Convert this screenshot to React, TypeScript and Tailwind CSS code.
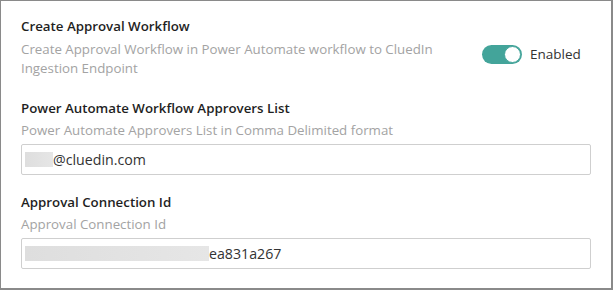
import React from 'react'

function Redacted({ width }: { width: number }) {
  return (
    <span
      className="inline-block h-[15px] bg-gradient-to-r from-[#dedede] to-[#e6e6e6]"
      style={{ width }}
    />
  )
}

function Field({ value, hidden }: { value: string; hidden: number }) {
  return (
    <div className="flex h-[31px] items-center rounded-[2px] border border-[#cfcfcf] bg-white pl-[3px] text-[14.2px] text-[#333]">
      <Redacted width={hidden} />
      <span>{value}</span>
    </div>
  )
}

function Toggle() {
  return (
    <div className="mt-[4px] flex w-[109px] shrink-0 items-center">
      <div className="flex h-[19px] w-[40px] items-center justify-end rounded-full bg-[#43a49a] p-[1px]">
        <div className="h-[17px] w-[17px] rounded-full border border-[#43a49a] bg-white" />
      </div>
      <span className="ml-[8px] text-[13.5px] text-[#333]">Enabled</span>
    </div>
  )
}

export default function App() {
  return (
    <div
      className="h-[290px] w-[613px] border-b-2 border-l border-r-2 border-t border-[#8a8a8a] bg-white px-[20px] pt-[15px]"
      style={{ fontFamily: '"Open Sans", "Noto Sans", sans-serif' }}
    >
      <section className="mb-[20px]">
        <h3 className="text-[13.3px] font-semibold leading-[20px] text-[#1f1f1f]">Create Approval Workflow</h3>
        <div className="mt-[4px] flex items-start justify-between">
          <p className="w-[440px] text-[13.3px] leading-[19px] text-[#a3a3a3]">
            Create Approval Workflow in Power Automate workflow to CluedIn Ingestion Endpoint
          </p>
          <Toggle />
        </div>
      </section>

      <section className="mb-[17px]">
        <h3 className="text-[13.3px] font-semibold leading-[20px] text-[#1f1f1f]">Power Automate Workflow Approvers List</h3>
        <p className="mt-[3px] text-[13.3px] leading-[19px] text-[#a3a3a3]">
          Power Automate Approvers List in Comma Delimited format
        </p>
        <div className="mt-[4px]">
          <Field value="@cluedin.com" hidden={28} />
        </div>
      </section>

      <section>
        <h3 className="text-[13.3px] font-semibold leading-[20px] text-[#1f1f1f]">Approval Connection Id</h3>
        <p className="mt-[3px] text-[13.3px] leading-[19px] text-[#a3a3a3]">Approval Connection Id</p>
        <div className="mt-[4px]">
          <Field value="ea831a267" hidden={184} />
        </div>
      </section>
    </div>
  )
}
